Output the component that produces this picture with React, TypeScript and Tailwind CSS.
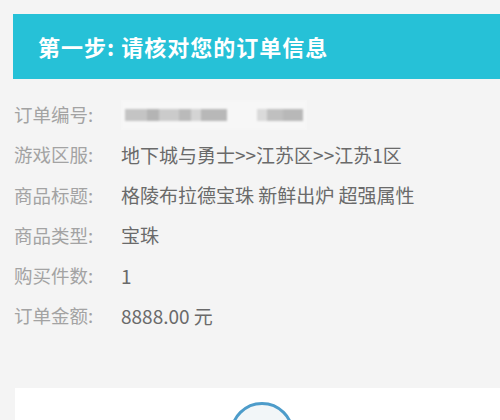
const rows: [string, string][] = [
  ["游戏区服:", "地下城与勇士>>江苏区>>江苏1区"],
  ["商品标题:", "格陵布拉德宝珠 新鲜出炉 超强属性"],
  ["商品类型:", "宝珠"],
  ["购买件数:", "1"],
  ["订单金额:", "8888.00 元"],
];

const font = { fontFamily: '"Noto Sans CJK SC", "Noto Sans", sans-serif' };

export default function App() {
  return (
    <div className="w-[500px] h-[420px] overflow-hidden bg-[#f4f4f4] pt-[14px]" style={font}>
      {/* Step header */}
      <div className="ml-[13px] h-[65px] bg-[#26c1d7] flex items-center pl-[25px]">
        <h1 className="text-white text-[22px] font-bold tracking-[1px]">第一步: 请核对您的订单信息</h1>
      </div>

      {/* Order info */}
      <div className="pl-[14px] pt-[16px]">
        <div className="flex items-center h-[40px]">
          <span className="w-[107px] text-[18.5px] text-[#a3a3a3]">订单编号:</span>
          <div className="flex items-center gap-[30px] h-[30px] px-[4px] bg-[#f7f7f7] blur-[1px]">
            <div className="flex h-[12px]">
              <div className="w-[22px] bg-[#c4c4c4]" />
              <div className="w-[12px] bg-[#b4b4b4]" />
              <div className="w-[20px] bg-[#cbcbcb]" />
              <div className="w-[12px] bg-[#bababa]" />
              <div className="w-[10px] bg-[#d4d4d4]" />
              <div className="w-[26px] bg-[#b8b8b8]" />
            </div>
            <div className="flex h-[12px]">
              <div className="w-[10px] bg-[#dadada]" />
              <div className="w-[16px] bg-[#c0c0c0]" />
              <div className="w-[20px] bg-[#b8b8b8]" />
            </div>
          </div>
        </div>
        {rows.map(([label, value]) => (
          <div key={label} className="flex items-center h-[40.3px]">
            <span className="w-[107px] text-[18.5px] text-[#a3a3a3]">{label}</span>
            <span className="text-[19px] text-[#6a6a6a]">{value}</span>
          </div>
        ))}
      </div>

      {/* Next card */}
      <div className="ml-[15px] mt-[52px] h-[60px] bg-white flex justify-center">
        <div className="mt-[14px] ml-[9px] w-[64px] h-[64px] rounded-full border-[3px] border-[#4d9cca] bg-[#f2f6f8]" />
      </div>
    </div>
  );
}
